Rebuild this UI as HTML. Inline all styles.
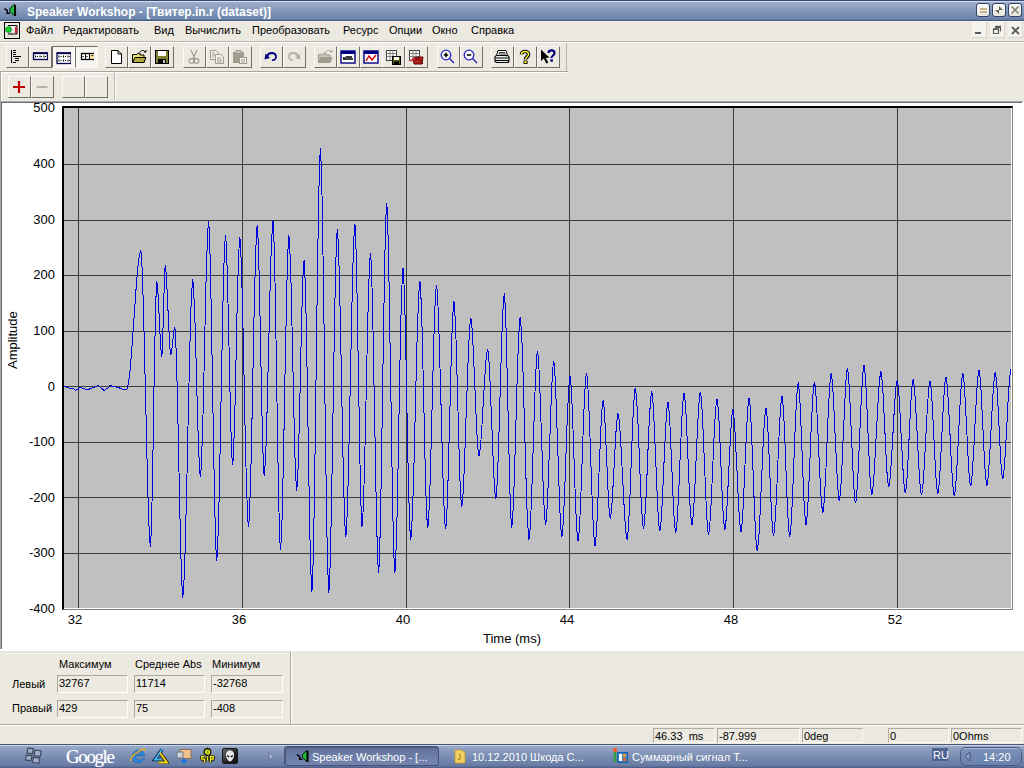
<!DOCTYPE html>
<html><head><meta charset="utf-8">
<style>
*{margin:0;padding:0;box-sizing:border-box}
html,body{width:1024px;height:768px;overflow:hidden;background:#ece9e1;font-family:"Liberation Sans",sans-serif;font-size:11px;color:#000;position:relative}
.a{position:absolute}
.tx{position:absolute;white-space:nowrap;line-height:1}
#title{left:0;top:0;width:1024px;height:21px;background:linear-gradient(#3a4a6a 0,#3a4a6a 1px,#d0dcf8 1px,#d0dcf8 2px,#9dadca 2px,#6a84ac 19px,#5f7496 20px,#4a5a78 20px,#4a5a78 21px)}
.L{position:absolute;height:1px}
.V{position:absolute;width:1px}
.btn{position:absolute;width:23px;height:22px;background:#ece9e1;border-top:1px solid #fbfaf8;border-left:1px solid #fbfaf8;border-right:1px solid #716f66;border-bottom:1px solid #716f66}
.btn.p{border-top:1px solid #716f66;border-left:1px solid #716f66;border-right:1px solid #fbfaf8;border-bottom:1px solid #fbfaf8;background:#f7f6f2}
.btn svg{position:absolute;left:2px;top:2px}
.yl{position:absolute;left:0;width:55px;font-size:13px;text-align:right;line-height:1;white-space:nowrap}
.xl{position:absolute;top:613px;width:40px;font-size:13px;text-align:center;line-height:1}
.fld{position:absolute;height:18px;border:1px solid #fff;border-top-color:#a9a79e;border-left-color:#a9a79e}
.fld span{position:absolute;left:1px;top:2px;font-size:11px;line-height:1;white-space:nowrap}
.sf{position:absolute;top:728px;height:15px;border:1px solid #fbfaf6;border-top-color:#aeaca3;border-left-color:#aeaca3}
.sf span{position:absolute;left:1px;top:2px;font-size:11px;line-height:1;white-space:nowrap}
.tb{position:absolute;color:#fff;font-size:12px;line-height:1;white-space:nowrap}
</style></head><body>
<!-- TITLE BAR -->
<div id="title" class="a"></div>
<svg class="a" style="left:2px;top:3px" width="15" height="14" viewBox="0 0 15 15">
<path d="M2 6 L5 8 L5 11 L8 11" fill="none" stroke="#000" stroke-width="1.6"/>
<path d="M8 6 L12 2 L13 2 L13 13 L12 13 L8 9 Z" fill="#1bbf3a" stroke="#000" stroke-width="1"/>
<rect x="12.5" y="2" width="2" height="12" fill="#000"/>
</svg>
<div class="tx" style="left:27px;top:6px;color:#fff;font-weight:bold;font-size:12px">Speaker Workshop - [Твитер.in.r (dataset)]</div>
<!-- title buttons -->
<div class="a" style="left:976px;top:3px;width:14px;height:14px;border:1px solid #34466a;border-radius:3px;background:linear-gradient(#fbfbfb,#e8e6e0)"></div>
<div class="a" style="left:980px;top:8px;width:7px;height:2px;background:#c4b68e"></div>
<div class="a" style="left:980px;top:11px;width:7px;height:2px;background:#c4b68e"></div>
<div class="a" style="left:992px;top:3px;width:14px;height:14px;border:1px solid #34466a;border-radius:3px;background:linear-gradient(#fbfbfb,#e8e6e0)"></div>
<svg class="a" style="left:994px;top:5px" width="10" height="10" viewBox="0 0 10 10"><path d="M5 1 L9 5 L5 5 Z M1 5 L5 5 L5 9 Z" fill="#6b6654"/></svg>
<div class="a" style="left:1008px;top:3px;width:14px;height:14px;border:1px solid #34466a;border-radius:3px;background:linear-gradient(#fbfbfb,#e8e6e0)"></div>
<svg class="a" style="left:1010px;top:5px" width="10" height="10" viewBox="0 0 10 10"><path d="M1.5 1.5 L8.5 8.5 M8.5 1.5 L1.5 8.5" stroke="#8a8470" stroke-width="1.6"/></svg>

<!-- MENU BAR -->
<div class="L" style="left:0;top:21px;width:1024px;background:#f4f4f6"></div>
<svg class="a" style="left:4px;top:22px" width="16" height="17" viewBox="0 0 16 17">
<rect x="0.5" y="0.5" width="15" height="16" fill="#e8e4de" stroke="#000"/>
<rect x="1.5" y="1.5" width="13" height="5" fill="#f5f0ee"/>
<path d="M4 3.5 H13 V12 H4" fill="none" stroke="#000" stroke-width="1"/>
<circle cx="4.5" cy="7.5" r="3" fill="#10d030" stroke="#0a6a10" stroke-width="0.6"/>
<path d="M12 5 V11" stroke="#d02030" stroke-width="2"/>
</svg>
<div class="tx" style="left:26px;top:25px">Файл</div>
<div class="tx" style="left:63px;top:25px">Редактировать</div>
<div class="tx" style="left:154px;top:25px">Вид</div>
<div class="tx" style="left:185px;top:25px">Вычислить</div>
<div class="tx" style="left:252px;top:25px">Преобразовать</div>
<div class="tx" style="left:343px;top:25px">Ресурс</div>
<div class="tx" style="left:389px;top:25px">Опции</div>
<div class="tx" style="left:432px;top:25px">Окно</div>
<div class="tx" style="left:471px;top:25px">Справка</div>
<!-- mdi buttons -->
<div class="a" style="left:972px;top:22px;width:15px;height:16px;border-right:1px solid #d8d6cc;border-bottom:1px solid #d8d6cc;background:#f4f3ee"></div>
<div class="a" style="left:975px;top:32px;width:6px;height:2px;background:#5a5a5a"></div>
<div class="a" style="left:990px;top:22px;width:15px;height:16px;border-right:1px solid #d8d6cc;border-bottom:1px solid #d8d6cc;background:#f4f3ee"></div>
<svg class="a" style="left:992px;top:25px" width="10" height="10" viewBox="0 0 10 10"><path d="M3 2.5 H8.5 V6.5 M1.5 4.5 H6.5 V8.5 H1.5 Z" fill="none" stroke="#5a5a5a" stroke-width="1.2"/><path d="M3 1.5 H9" stroke="#5a5a5a" stroke-width="1.4"/><path d="M1 4 H7" stroke="#5a5a5a" stroke-width="1.6"/></svg>
<div class="a" style="left:1008px;top:22px;width:15px;height:16px;border-right:1px solid #d8d6cc;border-bottom:1px solid #d8d6cc;background:#f4f3ee"></div>
<svg class="a" style="left:1011px;top:26px" width="9" height="9" viewBox="0 0 9 9"><path d="M1 1 L8 8 M8 1 L1 8" stroke="#5a5a5a" stroke-width="1.8"/></svg>

<div class="L" style="left:0;top:41px;width:1024px;background:#b9b6ad"></div>
<div class="L" style="left:0;top:42px;width:1024px;background:#fff"></div>

<!-- TOOLBAR 1 -->
<div class="btn" style="left:6px;top:46px;width:23px;height:22px"></div><svg class="a" style="left:9px;top:49px" width="16" height="16" viewBox="0 0 16 16"><path d="M2.5 1V14" stroke="#000" stroke-width="1"/><path d="M4 1.5H7M4 3.5H7M4 5.5H7M4 7.5H12M6 9.5H10M6 11.5H10M4 13.5H7" stroke="#000" stroke-width="1"/></svg>
<div class="btn" style="left:29px;top:46px;width:23px;height:22px"></div><svg class="a" style="left:32px;top:49px" width="16" height="16" viewBox="0 0 16 16"><rect x="1.5" y="4.5" width="14" height="6" fill="#fff" stroke="#000050" stroke-width="1.3"/><path d="M1 4H16" stroke="#000050" stroke-width="1.6"/><path d="M2 3.2V4M5 3.2V4M8 3.2V4M11 3.2V4M14 3.2V4" stroke="#000050"/><path d="M3.5 6.5V8.5M5 7.5H6M8 6.5V8.5M9 7.5H10M12 6.5V8.5M13 7.5H14" stroke="#000" stroke-width="1"/></svg>
<div class="btn p" style="left:52px;top:46px;width:23px;height:22px"></div><svg class="a" style="left:55px;top:49px" width="16" height="16" viewBox="0 0 16 16"><rect x="2" y="4.5" width="14" height="10" fill="#fff" stroke="#000050" stroke-width="1.3"/><path d="M1.5 4H16.5" stroke="#000050" stroke-width="1.6"/><path d="M3 3.2V4M6 3.2V4M9 3.2V4M12 3.2V4M15 3.2V4" stroke="#000050"/><path d="M4 6.5V8.5M5.5 7.5H6.5M8.5 6.5V8.5M10 7.5H11M13 6.5V8.5M14 7.5H14.7M4 10.5V12.5M5.5 11.5H6.5M8.5 10.5V12.5M10 11.5H11M13 10.5V12.5M14 11.5H14.7" stroke="#000" stroke-width="1"/></svg>
<div class="btn p" style="left:75px;top:46px;width:23px;height:22px"></div><svg class="a" style="left:78px;top:49px" width="16" height="16" viewBox="0 0 16 16"><rect x="3.5" y="4.5" width="13" height="6" fill="#fff" stroke="#000" stroke-width="1.3"/><rect x="12.5" y="5" width="3.5" height="5" fill="#f0d890"/><path d="M7.5 4.5V10.5M11.5 4.5V10.5" stroke="#000" stroke-width="1"/><path d="M5 7V8M9 7V8M13.5 6.5H15" stroke="#000" stroke-width="1.2"/></svg>
<div class="btn" style="left:105px;top:46px;width:23px;height:22px"></div><svg class="a" style="left:108px;top:49px" width="16" height="16" viewBox="0 0 16 16"><path d="M3.5 1.5H10L13.5 5V14.5H3.5Z" fill="#fff" stroke="#000"/><path d="M10 1.5V5H13.5" fill="none" stroke="#000"/></svg>
<div class="btn" style="left:128px;top:46px;width:23px;height:22px"></div><svg class="a" style="left:131px;top:49px" width="16" height="16" viewBox="0 0 16 16"><path d="M1.5 5.5H6L7 4H9V6H13V13.5H1.5Z" fill="#e8e070" stroke="#000"/><path d="M1.5 13.5L4 8.5H15L13 13.5Z" fill="#b0a840" stroke="#000"/><path d="M9 3C10 1 13 1 14 3" fill="none" stroke="#000"/><path d="M13 3H15V1" fill="none" stroke="#000"/></svg>
<div class="btn" style="left:151px;top:46px;width:23px;height:22px"></div><svg class="a" style="left:154px;top:49px" width="16" height="16" viewBox="0 0 16 16"><rect x="1.5" y="1.5" width="13" height="13" fill="#808030" stroke="#000"/><rect x="4" y="2" width="8" height="5" fill="#fff"/><rect x="4" y="10" width="8" height="4.5" fill="#000"/><rect x="9" y="11" width="2" height="3" fill="#c0c0c0"/></svg>
<div class="btn" style="left:183px;top:46px;width:23px;height:22px"></div><svg class="a" style="left:186px;top:49px" width="16" height="16" viewBox="0 0 16 16"><path d="M5 1L9 10M11 1L7 10" stroke="#a09c90" stroke-width="1.2"/><circle cx="5.5" cy="12" r="2.3" fill="none" stroke="#a09c90" stroke-width="1.2"/><circle cx="10.5" cy="12" r="2.3" fill="none" stroke="#a09c90" stroke-width="1.2"/></svg>
<div class="btn" style="left:206px;top:46px;width:23px;height:22px"></div><svg class="a" style="left:209px;top:49px" width="16" height="16" viewBox="0 0 16 16"><path d="M1.5 1.5H7L9 3.5V10.5H1.5Z" fill="#f4f2ec" stroke="#a09c90"/><path d="M6.5 5.5H12L14.5 8V14.5H6.5Z" fill="#f4f2ec" stroke="#a09c90"/><path d="M8 9H12M8 11H13M8 13H13M3 4H6M3 6H7M3 8H5" stroke="#a09c90"/></svg>
<div class="btn" style="left:229px;top:46px;width:23px;height:22px"></div><svg class="a" style="left:232px;top:49px" width="16" height="16" viewBox="0 0 16 16"><rect x="1" y="3" width="11" height="11" fill="#a09c90"/><rect x="4" y="1.5" width="5" height="3" fill="#c8c4b8" stroke="#a09c90"/><rect x="7.5" y="8.5" width="7" height="6" fill="#f4f2ec" stroke="#a09c90"/><path d="M9 11H13M9 13H13" stroke="#a09c90"/></svg>
<div class="btn" style="left:260px;top:46px;width:23px;height:22px"></div><svg class="a" style="left:263px;top:49px" width="16" height="16" viewBox="0 0 16 16"><path d="M4 7C6 3 12 3 13 7C13.5 10 11 11.5 9 11" fill="none" stroke="#000080" stroke-width="1.8"/><path d="M1.5 10.5L2.5 4.5L7 9Z" fill="#000080"/></svg>
<div class="btn" style="left:283px;top:46px;width:23px;height:22px"></div><svg class="a" style="left:286px;top:49px" width="16" height="16" viewBox="0 0 16 16"><path d="M12 7C10 3 4 3 3 7C2.5 10 5 11.5 7 11" fill="none" stroke="#b4b0a4" stroke-width="1.8"/><path d="M14.5 10.5L13.5 4.5L9 9Z" fill="#b4b0a4"/></svg>
<div class="btn" style="left:314px;top:46px;width:23px;height:22px"></div><svg class="a" style="left:317px;top:49px" width="16" height="16" viewBox="0 0 16 16"><path d="M1.5 5.5H6L7 4H9V6H13V13.5H1.5Z" fill="#c8c4b8" stroke="#a09c90"/><path d="M1.5 13.5L4 8.5H15L13 13.5Z" fill="#a09c90" stroke="#a09c90"/><path d="M9 3C10 1 13 1 14 3M13 3H15V1" fill="none" stroke="#a09c90"/></svg>
<div class="btn" style="left:337px;top:46px;width:23px;height:22px"></div><svg class="a" style="left:340px;top:49px" width="16" height="16" viewBox="0 0 16 16"><rect x="1" y="2" width="14" height="12" fill="#fff" stroke="#000080" stroke-width="1.4"/><rect x="1" y="2" width="14" height="3" fill="#000080"/><path d="M3 9H5M3 10H13" stroke="#000" stroke-width="1.3"/><path d="M5.5 8H12" stroke="#000" stroke-width="1.5"/></svg>
<div class="btn" style="left:360px;top:46px;width:23px;height:22px"></div><svg class="a" style="left:363px;top:49px" width="16" height="16" viewBox="0 0 16 16"><rect x="1" y="2" width="14" height="12" fill="#fff" stroke="#000080" stroke-width="1.4"/><rect x="1" y="2" width="14" height="3" fill="#000080"/><path d="M3 12L6 7L9 11L13 6" fill="none" stroke="#d00000" stroke-width="1.4"/></svg>
<div class="btn" style="left:382px;top:46px;width:23px;height:22px"></div><svg class="a" style="left:385px;top:49px" width="16" height="16" viewBox="0 0 16 16"><rect x="1.5" y="1.5" width="10" height="10" fill="#fff" stroke="#404040"/><path d="M1.5 4.5H11.5M1.5 7.5H11.5M5 1.5V11.5M8 1.5V11.5" stroke="#808080"/><rect x="7.5" y="7.5" width="8" height="8" fill="#506010" stroke="#000"/><rect x="9" y="8" width="5" height="3" fill="#fff"/><rect x="9" y="12.5" width="5" height="3" fill="#000"/></svg>
<div class="btn" style="left:405px;top:46px;width:23px;height:22px"></div><svg class="a" style="left:408px;top:49px" width="16" height="16" viewBox="0 0 16 16"><rect x="1.5" y="1.5" width="10" height="10" fill="#fff" stroke="#404040"/><path d="M1.5 4.5H11.5M1.5 7.5H11.5M5 1.5V11.5M8 1.5V11.5" stroke="#808080"/><path d="M5 9L10 8H15L14 15H6Z" fill="#b02020" stroke="#600000"/><path d="M5 10L11 10L15 15" fill="none" stroke="#600000"/><path d="M2 12L7 9" stroke="#e04040" stroke-width="2"/></svg>
<div class="btn" style="left:437px;top:46px;width:23px;height:22px"></div><svg class="a" style="left:440px;top:49px" width="16" height="16" viewBox="0 0 16 16"><circle cx="6" cy="6" r="4.8" fill="#fcfcff" stroke="#2828c8" stroke-width="1.3"/><path d="M3.8 6H8.2M6 3.8V8.2" stroke="#000" stroke-width="1.5"/><path d="M9.3 9.3L14 14" stroke="#2828b0" stroke-width="1.5"/></svg>
<div class="btn" style="left:460px;top:46px;width:23px;height:22px"></div><svg class="a" style="left:463px;top:49px" width="16" height="16" viewBox="0 0 16 16"><circle cx="6" cy="6" r="4.8" fill="#fcfcff" stroke="#2828c8" stroke-width="1.3"/><path d="M3.8 6H8.2" stroke="#000" stroke-width="1.5"/><path d="M9.3 9.3L14 14" stroke="#2828b0" stroke-width="1.5"/></svg>
<div class="btn" style="left:491px;top:46px;width:23px;height:22px"></div><svg class="a" style="left:494px;top:49px" width="16" height="16" viewBox="0 0 16 16"><path d="M4 1.5H12L13.5 6.5H2.5Z" fill="#fff" stroke="#000"/><path d="M5 3.5H11M4.5 5H12" stroke="#000" stroke-width="0.8"/><rect x="1" y="6.5" width="14" height="7" rx="2" fill="#f0f0f0" stroke="#000" stroke-width="1.2"/><path d="M1.5 9H14.5M1.5 11.5H14.5" stroke="#000" stroke-width="1.2"/><rect x="11.5" y="7.5" width="2" height="1.2" fill="#50a050"/></svg>
<div class="btn" style="left:514px;top:46px;width:23px;height:22px"></div><svg class="a" style="left:517px;top:49px" width="16" height="16" viewBox="0 0 16 16"><path d="M4.5 5.5C4.5 1.5 11.5 1.5 11.5 5.5C11.5 8 8.5 8 8.5 10.5" fill="none" stroke="#000" stroke-width="3.6"/><path d="M4.5 5.5C4.5 1.5 11.5 1.5 11.5 5.5C11.5 8 8.5 8 8.5 10.5" fill="none" stroke="#ffff20" stroke-width="1.5"/><rect x="6.5" y="11.5" width="4" height="3.5" fill="#000"/><rect x="7.3" y="12.2" width="2.2" height="2" fill="#ff0"/></svg>
<div class="btn" style="left:537px;top:46px;width:23px;height:22px"></div><svg class="a" style="left:540px;top:49px" width="16" height="16" viewBox="0 0 16 16"><path d="M1 0.5L1 12L3.8 9.5L6.3 14.5L8.3 13.5L5.8 8.8H9.5Z" fill="#000"/><path d="M8.5 4C8.5 0.5 14.5 0.5 14.5 4C14.5 6.5 11.5 6.5 11.5 9" fill="none" stroke="#000080" stroke-width="2.2"/><rect x="10.3" y="10.3" width="2.6" height="2.4" fill="#000080"/></svg>
<div class="V" style="left:566px;top:43px;height:28px;background:#b9b6ad"></div>
<div class="L" style="left:0;top:71px;width:568px;background:#a9a69d"></div>
<div class="L" style="left:0;top:72px;width:567px;background:#fff"></div>
<div class="V" style="left:0;top:72px;height:29px;background:#a9a69d"></div><div class="V" style="left:1px;top:72px;height:29px;background:#fff"></div>
<!-- TOOLBAR 2 -->
<div class="btn" style="left:8px;top:76px;width:23px;height:22px"></div><svg class="a" style="left:11px;top:79px" width="16" height="16" viewBox="0 0 16 16"><path d="M8 2V14M2 8H14" stroke="#c00000" stroke-width="2.2"/></svg>
<div class="btn" style="left:31px;top:76px;width:23px;height:22px"></div><svg class="a" style="left:34px;top:79px" width="16" height="16" viewBox="0 0 16 16"><path d="M2.5 8H13.5" stroke="#a8a59c" stroke-width="1.6"/></svg>
<div class="btn" style="left:62px;top:76px;width:23px;height:22px"></div>
<div class="btn" style="left:85px;top:76px;width:23px;height:22px"></div>
<div class="V" style="left:114px;top:72px;height:28px;background:#b9b6ad"></div><div class="V" style="left:115px;top:72px;height:28px;background:#fff"></div>

<!-- CHART PANEL -->
<div class="a" style="left:0;top:101px;width:1024px;height:550px;background:#fff"></div>
<div class="L" style="left:0;top:101px;width:1023px;background:#a8a8a8"></div>
<div class="L" style="left:1px;top:102px;width:1021px;background:#6e6e6e"></div>
<div class="V" style="left:0;top:101px;height:548px;background:#a8a8a8"></div>
<div class="V" style="left:1px;top:102px;height:547px;background:#6e6e6e"></div>

<!-- plot -->
<div class="a" style="left:62px;top:106px;width:951px;height:504px;background:#c0c0c0;border-top:2px solid #000;border-left:2px solid #000;border-right:1px solid #808080;border-bottom:1px solid #808080;box-shadow:inset -1px -1px 0 #fff"></div>
<svg class="a" style="left:0;top:0" width="1024" height="768" viewBox="0 0 1024 768">
<defs><clipPath id="cp"><rect x="64" y="108" width="947" height="500"/></clipPath></defs>
<g stroke="#3c3c3c" stroke-width="1" shape-rendering="crispEdges">
<path d="M64 164.5H1011M64 220.5H1011M64 275.5H1011M64 331.5H1011M64 386.5H1011M64 442.5H1011M64 497.5H1011M64 553.5H1011"/>
<path d="M78.5 108V608M242.5 108V608M406.5 108V608M569.5 108V608M733.5 108V608M897.5 108V608"/>
</g>
<path clip-path="url(#cp)" d="M64.0,386.3 64.6,386.4 65.1,386.6 65.7,387.0 66.2,387.2 66.8,387.3 67.4,387.4 67.9,387.6 68.5,387.9 69.1,388.3 69.6,388.5 70.2,388.6 70.7,388.6 71.3,388.5 71.8,388.4 72.4,388.3 72.9,388.3 73.5,388.5 74.1,389.1 74.7,389.8 75.3,390.0 75.9,390.0 76.5,389.9 77.1,389.7 77.7,389.7 78.2,389.3 78.8,388.5 79.3,387.7 79.8,387.3 80.3,387.3 80.8,387.5 81.3,387.7 81.8,387.9 82.4,388.2 82.9,388.4 83.4,388.6 83.9,388.6 84.5,388.7 85.0,388.9 85.6,389.3 86.2,389.6 86.7,389.9 87.3,390.0 87.9,389.9 88.4,389.7 89.0,389.3 89.6,389.0 90.1,388.7 90.7,388.6 91.3,388.5 91.8,388.3 92.4,388.0 93.0,387.6 93.5,387.4 94.1,387.3 94.6,387.2 95.1,387.1 95.6,386.8 96.2,386.5 96.7,386.1 97.2,385.8 97.7,385.7 98.2,385.6 98.8,385.8 99.3,386.4 99.9,387.2 100.4,387.8 101.0,388.0 101.6,388.2 102.1,388.6 102.7,389.2 103.3,389.8 103.8,390.2 104.4,390.4 104.9,390.2 105.5,389.8 106.0,389.2 106.6,388.8 107.1,388.6 107.7,388.4 108.2,387.9 108.8,387.1 109.4,386.4 109.9,385.8 110.5,385.6 111.1,385.7 111.6,385.9 112.2,386.1 112.8,386.4 113.3,386.5 113.9,386.6 114.4,386.6 114.9,386.7 115.4,386.8 116.0,386.9 116.5,387.1 117.0,387.2 117.5,387.3 118.0,387.3 118.6,387.4 119.1,387.7 119.7,388.2 120.2,388.5 120.8,388.6 121.4,388.7 121.9,388.9 122.5,389.3 123.1,389.6 123.6,389.9 124.2,390.0 124.8,389.9 125.3,389.6 125.9,389.4 126.4,389.1 127.0,389.0 127.5,387.6 128.0,385.4 128.5,382.6 129.0,379.0 129.6,374.7 130.1,369.8 130.6,364.3 131.1,358.4 131.6,351.9 132.1,345.1 132.6,338.0 133.1,330.7 133.6,323.2 134.2,315.8 134.7,308.3 135.2,301.0 135.7,293.9 136.2,287.1 136.7,280.6 137.2,274.7 137.7,269.2 138.2,264.3 138.8,260.0 139.3,256.4 139.8,253.6 140.3,251.4 140.8,250.0 141.3,254.7 141.8,262.7 142.3,273.7 142.8,287.6 143.3,304.0 143.8,322.6 144.3,343.0 144.8,364.6 145.3,387.1 145.9,409.9 146.4,432.4 146.9,454.0 147.4,474.4 147.9,493.0 148.4,509.4 148.9,523.3 149.4,534.3 149.9,542.3 150.4,547.0 150.9,539.0 151.5,523.9 152.0,502.6 152.5,476.2 153.1,446.2 153.6,414.2 154.1,382.3 154.7,352.3 155.2,325.9 155.7,304.6 156.3,289.5 156.8,281.5 157.3,284.5 157.8,290.3 158.3,298.4 158.8,308.3 159.3,319.1 159.8,329.9 160.3,339.8 160.8,347.9 161.3,353.7 161.8,356.7 162.4,348.7 162.9,332.3 163.5,310.9 164.1,289.6 164.6,273.2 165.2,265.2 165.7,268.3 166.2,274.2 166.7,282.5 167.2,292.7 167.7,304.2 168.3,316.0 168.8,327.5 169.3,337.7 169.8,346.0 170.3,351.9 170.8,355.0 171.3,353.4 171.8,350.3 172.3,345.9 172.8,340.9 173.3,335.9 173.8,331.5 174.3,328.4 174.8,326.8 175.3,332.3 175.8,341.8 176.3,355.2 176.8,372.0 177.3,391.8 177.8,413.9 178.3,437.6 178.8,462.1 179.3,486.7 179.8,510.4 180.3,532.5 180.8,552.3 181.3,569.1 181.8,582.5 182.3,592.0 182.8,597.5 183.3,592.4 183.8,583.9 184.4,572.1 184.9,557.3 185.4,539.7 185.9,519.8 186.4,498.0 187.0,474.7 187.5,450.7 188.0,426.3 188.5,402.3 189.1,379.0 189.6,357.2 190.1,337.3 190.6,319.7 191.1,304.9 191.7,293.1 192.2,284.6 192.7,279.5 193.2,283.9 193.7,291.6 194.2,302.5 194.8,316.2 195.3,332.2 195.8,349.9 196.3,368.7 196.8,387.8 197.3,406.6 197.8,424.3 198.3,440.3 198.9,454.0 199.4,464.9 199.9,472.6 200.4,477.0 200.9,471.8 201.4,462.8 201.9,450.2 202.4,434.3 203.0,415.6 203.5,394.7 204.0,372.3 204.5,349.1 205.0,326.0 205.5,303.6 206.0,282.7 206.6,264.0 207.1,248.1 207.6,235.5 208.1,226.5 208.6,221.3 209.1,228.1 209.6,240.1 210.1,256.9 210.6,278.0 211.1,302.8 211.6,330.5 212.1,360.2 212.6,391.0 213.2,421.7 213.7,451.4 214.2,479.1 214.7,503.9 215.2,525.0 215.7,541.8 216.2,553.8 216.7,560.6 217.2,554.5 217.7,544.1 218.3,529.6 218.8,511.3 219.3,489.7 219.8,465.4 220.3,439.2 220.8,411.7 221.4,383.8 221.9,356.3 222.4,330.1 222.9,305.8 223.4,284.2 223.9,265.9 224.5,251.4 225.0,241.0 225.5,234.9 226.0,240.5 226.5,250.6 227.0,264.8 227.5,282.7 228.0,303.4 228.5,326.2 229.1,349.9 229.6,373.7 230.1,396.5 230.6,417.2 231.1,435.1 231.6,449.3 232.1,459.4 232.6,465.0 233.1,459.5 233.6,449.5 234.1,435.4 234.7,417.7 235.2,397.1 235.7,374.6 236.2,351.1 236.7,327.6 237.2,305.1 237.7,284.5 238.3,266.8 238.8,252.7 239.3,242.7 239.8,237.2 240.3,242.6 240.8,251.8 241.3,264.8 241.8,281.1 242.4,300.3 242.9,321.9 243.4,345.3 243.9,369.7 244.4,394.5 244.9,418.9 245.4,442.3 245.9,463.9 246.5,483.1 247.0,499.4 247.5,512.4 248.0,521.6 248.5,527.0 249.0,521.4 249.5,511.7 250.0,498.3 250.5,481.3 251.1,461.3 251.6,438.8 252.1,414.5 252.6,389.0 253.1,363.2 253.6,337.7 254.1,313.4 254.6,290.9 255.2,270.9 255.7,253.9 256.2,240.5 256.7,230.8 257.2,225.2 257.7,231.3 258.2,242.3 258.7,257.8 259.2,277.3 259.7,299.9 260.2,324.7 260.7,350.5 261.2,376.4 261.7,401.2 262.2,423.8 262.7,443.3 263.2,458.8 263.7,469.8 264.2,475.9 264.7,471.2 265.2,463.0 265.8,451.7 266.3,437.3 266.8,420.5 267.3,401.5 267.8,381.0 268.3,359.5 268.9,337.7 269.4,316.2 269.9,295.7 270.4,276.7 270.9,259.9 271.4,245.5 272.0,234.2 272.5,226.0 273.0,221.3 273.5,228.6 274.0,241.5 274.5,259.6 275.0,282.4 275.5,309.1 276.0,338.6 276.5,369.9 277.0,401.8 277.5,433.1 278.0,462.6 278.5,489.3 279.0,512.1 279.5,530.2 280.0,543.1 280.5,550.4 281.0,544.0 281.6,532.9 282.1,517.4 282.6,497.8 283.1,474.7 283.6,449.0 284.2,421.5 284.7,392.9 285.2,364.4 285.8,336.9 286.3,311.2 286.8,288.1 287.3,268.5 287.8,253.0 288.4,241.9 288.9,235.5 289.4,241.1 289.9,251.1 290.5,265.2 291.0,282.8 291.5,303.5 292.0,326.4 292.5,350.6 293.1,375.4 293.6,399.6 294.1,422.5 294.6,443.2 295.1,460.8 295.7,474.9 296.2,484.9 296.7,490.5 297.2,484.9 297.8,474.8 298.3,460.5 298.8,442.5 299.3,421.7 299.9,398.9 300.4,375.1 300.9,351.2 301.5,328.4 302.0,307.6 302.5,289.6 303.0,275.3 303.6,265.2 304.1,259.6 304.6,266.9 305.1,280.0 305.7,298.3 306.2,321.3 306.7,348.2 307.2,378.1 307.7,409.7 308.3,441.9 308.8,473.5 309.3,503.4 309.8,530.3 310.3,553.3 310.9,571.6 311.4,584.7 311.9,592.0 312.4,583.8 312.9,569.6 313.4,549.8 313.9,524.8 314.4,495.4 314.9,462.4 315.4,426.6 315.9,389.2 316.4,351.3 316.9,313.9 317.4,278.1 317.9,245.1 318.4,215.7 318.9,190.7 319.4,170.9 319.9,156.7 320.4,148.5 320.9,157.5 321.4,173.1 322.0,195.1 322.5,222.8 323.0,255.3 323.6,291.6 324.1,330.5 324.6,370.8 325.1,411.0 325.6,449.9 326.2,486.2 326.7,518.7 327.2,546.4 327.8,568.4 328.3,584.0 328.8,593.0 329.3,586.2 329.8,574.6 330.3,558.3 330.8,537.8 331.3,513.7 331.8,486.5 332.3,457.2 332.8,426.5 333.3,395.3 333.8,364.6 334.3,335.3 334.8,308.1 335.3,284.0 335.8,263.5 336.3,247.2 336.8,235.6 337.3,228.8 337.8,234.5 338.3,244.4 338.8,258.1 339.3,275.5 339.8,295.9 340.3,318.9 340.8,343.7 341.3,369.7 341.8,396.0 342.3,422.0 342.8,446.8 343.3,469.8 343.8,490.2 344.3,507.6 344.8,521.3 345.3,531.2 345.8,536.9 346.3,531.5 346.8,522.4 347.3,509.7 347.8,493.7 348.3,474.7 348.8,453.4 349.3,430.1 349.8,405.5 350.4,380.3 350.9,355.1 351.4,330.5 351.9,307.2 352.4,285.9 352.9,266.9 353.4,250.9 353.9,238.2 354.4,229.1 354.9,223.7 355.4,231.1 355.9,244.4 356.4,263.1 356.9,286.6 357.4,314.0 357.9,343.9 358.4,375.2 359.0,406.5 359.5,436.4 360.0,463.8 360.5,487.3 361.0,506.0 361.5,519.3 362.0,526.7 362.5,521.6 363.0,512.9 363.5,500.7 364.0,485.3 364.5,467.2 365.0,446.8 365.5,424.8 366.0,401.8 366.5,378.4 367.0,355.4 367.5,333.4 368.0,313.0 368.5,294.9 369.0,279.5 369.5,267.3 370.0,258.6 370.5,253.5 371.0,260.0 371.5,271.2 372.0,287.1 372.5,307.0 373.0,330.4 373.5,356.5 374.0,384.5 374.6,413.4 375.1,442.4 375.6,470.4 376.1,496.5 376.6,519.9 377.1,539.8 377.6,555.7 378.1,566.9 378.6,573.4 379.1,565.9 379.6,552.8 380.1,534.5 380.6,511.4 381.1,484.3 381.6,454.1 382.1,421.6 382.6,388.0 383.2,354.5 383.7,322.0 384.2,291.8 384.7,264.7 385.2,241.6 385.7,223.3 386.2,210.2 386.7,202.7 387.2,210.2 387.7,223.3 388.2,241.6 388.7,264.7 389.2,291.8 389.7,322.0 390.2,354.5 390.8,388.0 391.3,421.6 391.8,454.1 392.3,484.3 392.8,511.4 393.3,534.5 393.8,552.8 394.3,565.9 394.8,573.4 395.3,567.2 395.8,556.4 396.3,541.3 396.9,522.3 397.4,499.9 397.9,475.0 398.4,448.2 398.9,420.5 399.4,392.9 399.9,366.1 400.4,341.2 400.9,318.8 401.5,299.8 402.0,284.7 402.5,273.9 403.0,267.7 403.5,273.7 404.0,284.4 404.5,299.4 405.1,318.3 405.6,340.4 406.1,364.8 406.6,390.7 407.1,417.2 407.6,443.1 408.1,467.5 408.6,489.6 409.2,508.5 409.7,523.5 410.2,534.2 410.7,540.2 411.2,535.7 411.7,528.2 412.2,517.6 412.7,504.4 413.3,488.7 413.8,471.0 414.3,451.7 414.8,431.3 415.3,410.4 415.8,389.5 416.3,369.1 416.8,349.8 417.3,332.1 417.9,316.4 418.4,303.2 418.9,292.6 419.4,285.1 419.9,280.6 420.4,286.1 420.9,295.8 421.5,309.4 422.0,326.6 422.5,346.7 423.0,368.9 423.5,392.5 424.1,416.5 424.6,440.1 425.1,462.3 425.6,482.4 426.1,499.6 426.7,513.2 427.2,522.9 427.7,528.4 428.2,523.9 428.7,516.1 429.3,505.2 429.8,491.5 430.3,475.4 430.8,457.3 431.3,437.6 431.8,417.1 432.4,396.3 432.9,375.8 433.4,356.1 433.9,338.0 434.4,321.9 434.9,308.2 435.5,297.3 436.0,289.5 436.5,285.0 437.0,289.2 437.5,296.3 438.0,306.2 438.5,318.7 439.0,333.5 439.5,350.2 440.0,368.3 440.5,387.5 441.1,407.2 441.6,426.9 442.1,446.1 442.6,464.2 443.1,480.9 443.6,495.7 444.1,508.2 444.6,518.1 445.1,525.2 445.6,529.4 446.1,524.8 446.6,516.7 447.2,505.4 447.7,491.2 448.2,474.5 448.7,455.8 449.2,435.8 449.8,415.1 450.3,394.5 450.8,374.5 451.3,355.8 451.8,339.1 452.3,324.9 452.9,313.6 453.4,305.5 453.9,300.9 454.4,305.5 454.9,313.5 455.5,324.9 456.0,339.2 456.5,356.0 457.0,374.5 457.5,394.1 458.1,414.2 458.6,433.8 459.1,452.3 459.6,469.1 460.1,483.4 460.7,494.8 461.2,502.8 461.7,507.4 462.2,504.1 462.7,498.6 463.2,490.9 463.7,481.2 464.2,469.8 464.7,456.8 465.2,442.8 465.7,427.9 466.2,412.6 466.8,397.3 467.3,382.4 467.8,368.4 468.3,355.4 468.8,344.0 469.3,334.3 469.8,326.6 470.3,321.1 470.8,317.8 471.3,320.6 471.8,325.5 472.3,332.3 472.8,340.9 473.3,351.0 473.8,362.3 474.3,374.4 474.9,386.9 475.4,399.4 475.9,411.5 476.4,422.8 476.9,432.9 477.4,441.5 477.9,448.3 478.4,453.2 478.9,456.0 479.4,454.0 479.9,450.6 480.5,445.8 481.0,439.8 481.5,432.7 482.0,424.7 482.5,416.1 483.0,407.1 483.6,397.9 484.1,388.9 484.6,380.3 485.1,372.3 485.6,365.2 486.1,359.2 486.7,354.4 487.2,351.0 487.7,349.0 488.2,352.0 488.7,357.3 489.2,364.7 489.7,374.1 490.2,385.0 490.7,397.3 491.2,410.4 491.8,424.0 492.3,437.6 492.8,450.7 493.3,463.0 493.8,473.9 494.3,483.3 494.8,490.7 495.3,496.0 495.8,499.0 496.3,495.2 496.8,488.6 497.3,479.4 497.8,467.9 498.3,454.2 498.8,438.9 499.3,422.3 499.8,405.0 500.3,387.4 500.8,370.1 501.3,353.5 501.8,338.2 502.3,324.5 502.8,313.0 503.3,303.8 503.8,297.2 504.3,293.4 504.8,299.1 505.4,309.4 505.9,323.9 506.4,342.1 506.9,363.2 507.5,386.3 508.0,410.6 508.5,434.8 509.1,457.9 509.6,479.0 510.1,497.2 510.6,511.7 511.2,522.0 511.7,527.7 512.2,523.8 512.7,517.0 513.2,507.6 513.7,495.8 514.2,481.8 514.7,466.1 515.2,449.1 515.7,431.3 516.2,413.2 516.7,395.4 517.2,378.4 517.7,362.7 518.2,348.7 518.7,336.9 519.2,327.5 519.7,320.7 520.2,316.8 520.7,320.9 521.2,328.1 521.8,338.0 522.3,350.5 522.8,365.3 523.3,381.9 523.8,399.9 524.3,418.7 524.9,437.7 525.4,456.5 525.9,474.5 526.4,491.1 526.9,505.9 527.4,518.4 528.0,528.3 528.5,535.5 529.0,539.6 529.5,536.1 530.0,530.1 530.5,521.6 531.0,511.0 531.5,498.5 532.0,484.5 532.5,469.3 533.0,453.4 533.5,437.2 534.0,421.3 534.5,406.1 535.0,392.1 535.5,379.6 536.0,369.0 536.5,360.5 537.0,354.5 537.5,351.0 538.0,354.5 538.5,360.6 539.0,369.3 539.5,380.1 540.0,392.8 540.5,407.0 541.0,422.2 541.5,438.0 542.1,453.8 542.6,469.0 543.1,483.2 543.6,495.9 544.1,506.7 544.6,515.4 545.1,521.5 545.6,525.0 546.1,521.7 546.6,515.9 547.1,507.8 547.6,497.6 548.1,485.6 548.6,472.2 549.1,457.9 549.7,443.1 550.2,428.2 550.7,413.9 551.2,400.5 551.7,388.5 552.2,378.3 552.7,370.2 553.2,364.4 553.7,361.1 554.2,364.7 554.7,370.9 555.2,379.6 555.7,390.5 556.2,403.4 556.7,417.8 557.2,433.2 557.8,449.2 558.3,465.1 558.8,480.5 559.3,494.9 559.8,507.8 560.3,518.7 560.8,527.4 561.3,533.6 561.8,537.2 562.3,533.9 562.8,528.3 563.3,520.3 563.8,510.3 564.4,498.5 564.9,485.3 565.4,471.2 565.9,456.6 566.4,442.0 566.9,427.9 567.4,414.7 568.0,402.9 568.5,392.9 569.0,384.9 569.5,379.3 570.0,376.0 570.5,379.3 571.0,385.2 571.5,393.3 572.0,403.6 572.5,415.7 573.0,429.2 573.5,443.7 574.0,458.6 574.5,473.6 575.0,488.1 575.5,501.6 576.0,513.7 576.5,524.0 577.0,532.1 577.5,538.0 578.0,541.3 578.5,538.2 579.0,532.8 579.5,525.3 580.0,515.8 580.5,504.6 581.0,492.1 581.5,478.5 582.0,464.4 582.5,449.9 583.0,435.8 583.5,422.2 584.0,409.7 584.5,398.5 585.0,389.0 585.5,381.5 586.0,376.1 586.5,373.0 587.0,376.2 587.5,381.7 588.0,389.4 588.5,399.2 589.0,410.6 589.5,423.5 590.0,437.4 590.5,452.0 591.0,466.7 591.5,481.3 592.0,495.2 592.5,508.1 593.0,519.5 593.5,529.3 594.0,537.0 594.5,542.5 595.0,545.7 595.5,542.8 596.0,537.6 596.5,530.4 597.0,521.4 597.5,510.7 598.0,498.8 598.5,486.1 599.0,472.9 599.6,459.7 600.1,447.0 600.6,435.1 601.1,424.4 601.6,415.4 602.1,408.2 602.6,403.0 603.1,400.1 603.6,403.0 604.1,408.2 604.6,415.5 605.1,424.7 605.6,435.4 606.1,447.1 606.7,459.4 607.2,471.6 607.7,483.3 608.2,494.0 608.7,503.2 609.2,510.5 609.7,515.7 610.2,518.6 610.7,516.3 611.2,512.2 611.8,506.4 612.3,499.1 612.8,490.6 613.3,481.2 613.8,471.2 614.4,461.0 614.9,451.0 615.4,441.6 615.9,433.1 616.4,425.8 617.0,420.0 617.5,415.9 618.0,413.6 618.5,415.8 619.0,419.4 619.5,424.6 620.0,431.0 620.5,438.6 621.0,447.2 621.5,456.6 622.0,466.4 622.5,476.6 623.1,486.8 623.6,496.6 624.1,506.0 624.6,514.6 625.1,522.2 625.6,528.6 626.1,533.8 626.6,537.4 627.1,539.6 627.6,536.5 628.1,531.2 628.6,523.7 629.1,514.2 629.7,503.1 630.2,490.7 630.7,477.4 631.2,463.6 631.7,449.9 632.2,436.6 632.7,424.2 633.2,413.1 633.8,403.6 634.3,396.1 634.8,390.8 635.3,387.7 635.8,390.6 636.3,395.5 636.8,402.5 637.3,411.3 637.9,421.7 638.4,433.2 638.9,445.6 639.4,458.4 639.9,471.1 640.4,483.5 640.9,495.0 641.5,505.4 642.0,514.2 642.5,521.2 643.0,526.1 643.5,529.0 644.0,526.2 644.5,521.3 645.0,514.5 645.5,505.9 646.1,495.8 646.6,484.6 647.1,472.5 647.6,460.0 648.1,447.5 648.6,435.4 649.1,424.2 649.7,414.1 650.2,405.5 650.7,398.7 651.2,393.8 651.7,391.0 652.2,393.8 652.7,398.8 653.2,405.7 653.7,414.5 654.2,424.7 654.7,436.2 655.2,448.5 655.8,461.2 656.3,473.9 656.8,486.2 657.3,497.7 657.8,507.9 658.3,516.7 658.8,523.6 659.3,528.6 659.8,531.4 660.3,528.8 660.8,524.2 661.3,517.8 661.8,509.7 662.3,500.3 662.8,489.7 663.3,478.3 663.8,466.6 664.4,454.9 664.9,443.5 665.4,432.9 665.9,423.5 666.4,415.4 666.9,409.0 667.4,404.4 667.9,401.8 668.4,404.7 668.9,409.8 669.5,417.1 670.0,426.2 670.5,436.8 671.0,448.6 671.5,461.1 672.1,473.8 672.6,486.3 673.1,498.1 673.6,508.7 674.1,517.8 674.7,525.1 675.2,530.2 675.7,533.1 676.2,530.3 676.8,525.3 677.3,518.4 677.8,509.6 678.3,499.3 678.9,487.9 679.4,475.6 679.9,462.9 680.4,450.1 681.0,437.8 681.5,426.4 682.0,416.1 682.5,407.3 683.1,400.4 683.6,395.4 684.1,392.6 684.6,395.5 685.1,400.7 685.7,408.0 686.2,417.2 686.7,428.0 687.2,439.9 687.7,452.5 688.3,465.4 688.8,478.0 689.3,489.9 689.8,500.7 690.3,509.9 690.9,517.2 691.4,522.4 691.9,525.3 692.4,522.8 692.9,518.5 693.4,512.6 693.9,505.1 694.4,496.2 694.9,486.2 695.4,475.4 695.9,464.2 696.4,452.7 696.9,441.5 697.4,430.7 697.9,420.7 698.4,411.8 698.9,404.3 699.4,398.4 699.9,394.1 700.4,391.6 700.9,394.5 701.4,399.5 701.9,406.6 702.4,415.5 702.9,426.0 703.4,437.7 703.9,450.2 704.5,463.2 705.0,476.2 705.5,488.7 706.0,500.4 706.5,510.9 707.0,519.8 707.5,526.9 708.0,531.9 708.5,534.8 709.0,532.3 709.5,527.9 710.0,521.8 710.5,514.2 711.0,505.2 711.5,495.0 712.0,484.0 712.5,472.6 713.0,460.9 713.5,449.5 714.0,438.5 714.5,428.3 715.0,419.3 715.5,411.7 716.0,405.6 716.5,401.2 717.0,398.7 717.5,401.6 718.0,406.7 718.6,413.9 719.1,423.0 719.6,433.6 720.1,445.4 720.6,457.8 721.2,470.6 721.7,483.0 722.2,494.8 722.7,505.4 723.2,514.5 723.8,521.7 724.3,526.8 724.8,529.7 725.3,527.3 725.8,523.0 726.3,517.1 726.8,509.6 727.3,500.8 727.8,491.0 728.3,480.5 728.8,469.7 729.4,458.8 729.9,448.3 730.4,438.5 730.9,429.7 731.4,422.2 731.9,416.3 732.4,412.0 732.9,409.6 733.4,412.1 733.9,416.4 734.4,422.5 734.9,430.1 735.4,439.0 735.9,449.0 736.4,459.8 737.0,470.9 737.5,481.9 738.0,492.7 738.5,502.7 739.0,511.6 739.5,519.2 740.0,525.3 740.5,529.6 741.0,532.1 741.5,529.4 742.0,524.6 742.5,518.0 743.0,509.6 743.5,499.8 744.0,488.8 744.5,477.1 745.0,464.9 745.6,452.7 746.1,441.0 746.6,430.0 747.1,420.2 747.6,411.8 748.1,405.2 748.6,400.4 749.1,397.7 749.6,400.8 750.1,406.2 750.6,413.8 751.1,423.3 751.6,434.5 752.1,447.0 752.6,460.3 753.2,474.2 753.7,488.1 754.2,501.4 754.7,513.9 755.2,525.1 755.7,534.6 756.2,542.2 756.7,547.6 757.2,550.7 757.7,548.0 758.2,543.5 758.8,537.1 759.3,529.1 759.8,519.6 760.3,509.0 760.8,497.5 761.3,485.4 761.9,473.2 762.4,461.1 762.9,449.6 763.4,439.0 763.9,429.5 764.4,421.5 765.0,415.1 765.5,410.6 766.0,407.9 766.5,410.7 767.0,415.7 767.5,422.8 768.0,431.6 768.5,442.0 769.0,453.5 769.5,465.6 770.0,478.1 770.5,490.2 771.0,501.7 771.5,512.1 772.0,520.9 772.5,528.0 773.0,533.0 773.5,535.8 774.0,533.2 774.5,528.7 775.0,522.5 775.5,514.6 776.0,505.4 776.5,494.9 777.0,483.7 777.5,471.9 778.0,459.9 778.5,448.1 779.0,436.9 779.5,426.4 780.0,417.2 780.5,409.3 781.0,403.1 781.5,398.6 782.0,396.0 782.5,399.1 783.0,404.6 783.5,412.4 784.1,422.2 784.6,433.7 785.1,446.3 785.6,459.8 786.1,473.4 786.6,486.9 787.1,499.5 787.6,511.0 788.2,520.8 788.7,528.6 789.2,534.1 789.7,537.2 790.2,534.3 790.7,529.4 791.2,522.5 791.7,513.8 792.2,503.5 792.7,492.0 793.2,479.5 793.7,466.5 794.2,453.2 794.7,440.2 795.2,427.7 795.7,416.2 796.2,405.9 796.7,397.2 797.2,390.3 797.7,385.4 798.2,382.5 798.7,385.6 799.2,391.2 799.8,399.1 800.3,408.9 800.8,420.4 801.3,433.2 801.8,446.7 802.4,460.5 802.9,474.0 803.4,486.8 803.9,498.3 804.4,508.1 805.0,516.0 805.5,521.6 806.0,524.7 806.5,521.8 807.0,516.8 807.6,509.7 808.1,500.8 808.6,490.4 809.1,478.7 809.7,466.2 810.2,453.2 810.7,440.3 811.2,427.8 811.8,416.1 812.3,405.7 812.8,396.8 813.4,389.7 813.9,384.7 814.4,381.8 814.9,384.4 815.4,389.1 816.0,395.5 816.5,403.7 817.0,413.3 817.5,424.0 818.1,435.4 818.6,447.3 819.1,459.2 819.6,470.6 820.2,481.3 820.7,490.9 821.2,499.1 821.8,505.5 822.3,510.2 822.8,512.8 823.3,510.0 823.8,505.1 824.4,498.2 824.9,489.5 825.4,479.3 826.0,467.9 826.5,455.7 827.0,443.0 827.5,430.4 828.0,418.2 828.6,406.8 829.1,396.6 829.6,387.9 830.2,381.0 830.7,376.1 831.2,373.3 831.7,375.9 832.2,380.4 832.7,386.7 833.2,394.6 833.7,404.0 834.2,414.4 834.7,425.6 835.2,437.1 835.8,448.7 836.3,459.9 836.8,470.3 837.3,479.7 837.8,487.6 838.3,493.9 838.8,498.4 839.3,501.0 839.8,498.3 840.3,493.6 840.8,487.0 841.3,478.8 841.8,469.0 842.3,458.2 842.8,446.5 843.3,434.4 843.9,422.4 844.4,410.7 844.9,399.9 845.4,390.1 845.9,381.9 846.4,375.3 846.9,370.6 847.4,367.9 847.9,370.6 848.4,375.4 848.9,382.1 849.4,390.5 849.9,400.4 850.4,411.5 850.9,423.3 851.5,435.6 852.0,447.9 852.5,459.7 853.0,470.8 853.5,480.7 854.0,489.1 854.5,495.8 855.0,500.6 855.5,503.3 856.0,500.7 856.5,496.3 857.0,490.1 857.5,482.3 858.0,473.2 858.5,462.8 859.0,451.7 859.5,440.0 860.0,428.2 860.5,416.5 861.0,405.4 861.5,395.0 862.0,385.9 862.5,378.1 863.0,371.9 863.5,367.5 864.0,364.9 864.5,367.8 865.0,372.9 865.6,380.1 866.1,389.1 866.6,399.6 867.1,411.3 867.6,423.7 868.2,436.4 868.7,448.8 869.2,460.5 869.7,471.0 870.2,480.0 870.8,487.2 871.3,492.3 871.8,495.2 872.3,493.1 872.8,489.5 873.3,484.5 873.8,478.1 874.3,470.7 874.8,462.2 875.3,453.1 875.8,443.4 876.3,433.4 876.9,423.4 877.4,413.7 877.9,404.6 878.4,396.1 878.9,388.7 879.4,382.3 879.9,377.3 880.4,373.7 880.9,371.6 881.4,374.2 881.9,378.7 882.5,385.1 883.0,393.1 883.5,402.5 884.0,412.9 884.5,423.9 885.1,435.1 885.6,446.1 886.1,456.5 886.6,465.9 887.1,473.9 887.7,480.3 888.2,484.8 888.7,487.4 889.2,485.4 889.7,482.0 890.2,477.2 890.7,471.1 891.2,464.0 891.7,456.0 892.2,447.4 892.7,438.3 893.2,429.2 893.7,420.1 894.2,411.5 894.7,403.5 895.2,396.4 895.7,390.3 896.2,385.5 896.7,382.1 897.2,380.1 897.7,382.4 898.2,386.4 898.7,392.0 899.2,399.0 899.7,407.3 900.2,416.5 900.7,426.4 901.2,436.6 901.8,446.9 902.3,456.8 902.8,466.0 903.3,474.3 903.8,481.3 904.3,486.9 904.8,490.9 905.3,493.2 905.8,490.7 906.3,486.2 906.9,479.9 907.4,472.0 907.9,462.8 908.4,452.5 908.9,441.7 909.5,430.6 910.0,419.8 910.5,409.5 911.0,400.3 911.5,392.4 912.1,386.1 912.6,381.6 913.1,379.1 913.6,381.4 914.1,385.5 914.7,391.3 915.2,398.5 915.7,407.0 916.2,416.5 916.8,426.6 917.3,437.1 917.8,447.7 918.4,457.8 918.9,467.3 919.4,475.8 919.9,483.0 920.5,488.8 921.0,492.9 921.5,495.2 922.0,493.1 922.5,489.5 923.0,484.4 923.5,478.0 924.0,470.4 924.5,462.0 925.0,452.8 925.5,443.2 926.0,433.5 926.5,423.9 927.0,414.7 927.5,406.3 928.0,398.7 928.5,392.3 929.0,387.2 929.5,383.6 930.0,381.5 930.5,384.0 931.0,388.4 931.6,394.6 932.1,402.4 932.6,411.6 933.1,421.7 933.6,432.4 934.2,443.3 934.7,454.0 935.2,464.1 935.7,473.3 936.2,481.1 936.8,487.3 937.3,491.7 937.8,494.2 938.3,491.8 938.8,487.7 939.3,481.9 939.8,474.6 940.3,466.0 940.8,456.4 941.3,446.1 941.8,435.4 942.4,424.8 942.9,414.5 943.4,404.9 943.9,396.3 944.4,389.0 944.9,383.2 945.4,379.1 945.9,376.7 946.4,379.1 946.9,383.3 947.5,389.2 948.0,396.6 948.5,405.3 949.0,415.1 949.6,425.5 950.1,436.3 950.6,447.1 951.1,457.5 951.7,467.3 952.2,476.0 952.7,483.4 953.2,489.3 953.8,493.5 954.3,495.9 954.8,493.6 955.3,489.7 955.8,484.2 956.3,477.3 956.8,469.2 957.3,460.1 957.8,450.2 958.3,439.8 958.8,429.4 959.3,419.0 959.8,409.1 960.3,400.0 960.8,391.9 961.3,385.0 961.8,379.5 962.3,375.6 962.8,373.3 963.3,375.8 963.8,380.2 964.4,386.5 964.9,394.3 965.4,403.5 965.9,413.6 966.4,424.4 967.0,435.3 967.5,446.1 968.0,456.2 968.5,465.4 969.0,473.2 969.6,479.5 970.1,483.9 970.6,486.4 971.1,484.1 971.6,479.9 972.2,474.2 972.7,466.9 973.2,458.4 973.8,448.9 974.3,438.7 974.8,428.2 975.3,417.7 975.9,407.5 976.4,398.0 976.9,389.5 977.4,382.2 978.0,376.5 978.5,372.3 979.0,370.0 979.5,372.6 980.0,377.1 980.6,383.5 981.1,391.5 981.6,400.9 982.1,411.2 982.6,422.2 983.2,433.5 983.7,444.5 984.2,454.8 984.7,464.2 985.2,472.2 985.8,478.6 986.3,483.1 986.8,485.7 987.3,483.6 987.8,480.0 988.3,474.9 988.8,468.5 989.3,461.0 989.8,452.6 990.3,443.4 990.8,433.9 991.3,424.1 991.8,414.6 992.3,405.4 992.8,397.0 993.3,389.5 993.8,383.1 994.3,378.0 994.8,374.4 995.3,372.3 995.8,374.9 996.4,379.6 996.9,386.2 997.4,394.5 997.9,404.1 998.5,414.6 999.0,425.6 999.5,436.7 1000.1,447.2 1000.6,456.8 1001.1,465.1 1001.6,471.7 1002.2,476.4 1002.7,479.0 1003.2,476.8 1003.7,472.9 1004.3,467.5 1004.8,460.6 1005.3,452.6 1005.8,443.6 1006.3,434.0 1006.9,424.0 1007.4,414.0 1007.9,404.4 1008.4,395.4 1008.9,387.4 1009.4,380.5 1010.0,375.1 1010.5,371.2 1011.0,369.0" fill="none" stroke="#0000d8" stroke-width="1" shape-rendering="crispEdges"/>
</svg>
<div class="yl" style="top:101px">500</div>
<div class="yl" style="top:157px">400</div>
<div class="yl" style="top:213px">300</div>
<div class="yl" style="top:268px">200</div>
<div class="yl" style="top:324px">100</div>
<div class="yl" style="top:380px">0</div>
<div class="yl" style="top:435px">-100</div>
<div class="yl" style="top:491px">-200</div>
<div class="yl" style="top:546px">-300</div>
<div class="yl" style="top:602px">-400</div>
<div class="tx" style="left:6px;top:369px;font-size:13px;transform:rotate(-90deg);transform-origin:0 0">Amplitude</div>
<div class="xl" style="left:55px">32</div>
<div class="xl" style="left:219px">36</div>
<div class="xl" style="left:383px">40</div>
<div class="xl" style="left:547px">44</div>
<div class="xl" style="left:711px">48</div>
<div class="xl" style="left:875px">52</div>
<div class="tx" style="left:483px;top:632px;font-size:13px">Time (ms)</div>

<!-- STATS -->
<div class="L" style="left:0;top:652px;width:290px;background:#e0ddd5"></div><div class="L" style="left:0;top:653px;width:290px;background:#f7f6f2"></div>
<div class="tx" style="left:59px;top:659px">Максимум</div>
<div class="tx" style="left:135px;top:659px">Среднее Abs</div>
<div class="tx" style="left:212px;top:659px">Минимум</div>
<div class="tx" style="left:12px;top:679px">Левый</div>
<div class="tx" style="left:12px;top:703px">Правый</div>
<div class="fld" style="left:57px;top:675px;width:71px"><span>32767</span></div>
<div class="fld" style="left:134px;top:675px;width:71px"><span>11714</span></div>
<div class="fld" style="left:211px;top:675px;width:72px"><span>-32768</span></div>
<div class="fld" style="left:57px;top:700px;width:71px"><span>429</span></div>
<div class="fld" style="left:134px;top:700px;width:71px"><span>75</span></div>
<div class="fld" style="left:211px;top:700px;width:72px"><span>-408</span></div>
<div class="V" style="left:290px;top:651px;height:73px;background:#aca99f"></div>
<div class="V" style="left:291px;top:651px;height:73px;background:#fff"></div>

<!-- STATUS BAR -->
<div class="L" style="left:0;top:724px;width:1024px;background:#aca99f"></div>
<div class="L" style="left:0;top:725px;width:1024px;background:#fff"></div>
<div class="sf" style="left:653px;width:62px"><span>46.33&nbsp;&nbsp;ms</span></div>
<div class="sf" style="left:717px;width:83px"><span>-87.999</span></div>
<div class="sf" style="left:802px;width:61px"><span>0deg</span></div>
<div class="sf" style="left:888px;width:61px"><span>0</span></div>
<div class="sf" style="left:951px;width:71px"><span>0Ohms</span></div>

<!-- <div class="a" style="left:0;top:744px;width:1024px;height:24px;background:linear-gradient(#4a566e 0,#4a566e 1px,#c6d4ec 1px,#c6d4ec 2px,#98aac8 2px,#8799bb 8px,#7689ae 14px,#6a7da6 21px,#5a6d98 23px,#50628c 23px,#50628c 24px)"></div>
<svg class="a" style="left:24px;top:747px" width="19" height="18" viewBox="0 0 19 18">
<g fill="#a2b0c6" stroke="#3c4862" stroke-width="1.2" stroke-linejoin="round">
<path d="M4 1.2L9.5 1.7L8.5 6.6L3 6.1Z"/><path d="M11 3L17.3 4L16.3 9.4L10 8.5Z"/>
<path d="M2.5 8.2L8 8.7L7 13.6L1.5 13.1Z"/><path d="M9.5 10.2L15.8 11.2L14.8 16.4L8.5 15.5Z"/>
</g></svg>
<div class="tx" style="left:66px;top:747px;font-family:'Liberation Serif',serif;font-size:19px;color:#fff;letter-spacing:-1.4px;text-shadow:0 0 1px #c0c8e0">Google</div>
<!-- quick launch -->
<svg class="a" style="left:130px;top:748px" width="16" height="16" viewBox="0 0 16 16">
<path d="M2 10C2 5 5 2 9 2C12.5 2 14.5 4.5 14.5 8H5.5C5.5 10.5 7 12 9.5 12C11 12 12 11.4 13 10.5H14.3C13.2 13 11.4 14.5 9 14.5C5 14.5 2 12.5 2 10Z M5.6 6.4H11.3C11 5 10.2 4.2 8.5 4.2C7 4.2 6 5 5.6 6.4Z" fill="#2a8ae0" stroke="#1050a0" stroke-width="0.5"/>
<path d="M1 13C0 10 6 3 14 1C15.5 0.8 15 2 14 2.5" fill="none" stroke="#e8a820" stroke-width="1.5"/>
</svg>
<svg class="a" style="left:152px;top:748px" width="17" height="16" viewBox="0 0 17 16">
<path d="M10 1.5L3 11.5H9" fill="none" stroke="#102040" stroke-width="3.6" stroke-linejoin="miter"/>
<path d="M8 5L15 14.5H6.5" fill="none" stroke="#302000" stroke-width="3.6" stroke-linejoin="miter"/>
<path d="M10 1.5L3 11.5H9" fill="none" stroke="#40b8f0" stroke-width="1.8"/>
<path d="M8 5L15 14.5H6.5" fill="none" stroke="#f8e020" stroke-width="1.8"/>
</svg>
<svg class="a" style="left:176px;top:748px" width="17" height="16" viewBox="0 0 17 16">
<rect x="4" y="1.5" width="11" height="9" fill="#f0c090" stroke="#8a6a50"/>
<rect x="1" y="4" width="6" height="6" fill="#c8d4e0" stroke="#707880"/>
<path d="M8 10V14M5.5 12L8 15L10.5 12" stroke="#2070e0" stroke-width="1.8" fill="none"/>
</svg>
<svg class="a" style="left:200px;top:747px" width="15" height="17" viewBox="0 0 15 17">
<circle cx="7.5" cy="5" r="3.3" fill="#f0f020" stroke="#202000" stroke-width="1.4"/>
<circle cx="7.5" cy="5" r="1.2" fill="#60a020"/>
<path d="M7.5 0.5V1.7" stroke="#202000" stroke-width="1.2"/>
<g fill="none" stroke="#202000" stroke-width="3.2" stroke-linejoin="round"><path d="M4.5 9.5H1.8V12.2H4.5V15.5"/><path d="M7.5 9.5V13.5"/><path d="M10.5 15.5V9.5H13.2V12.2H10.5"/></g>
<g fill="none" stroke="#f4f020" stroke-width="1.3"><path d="M4.5 9.5H1.8V12.2H4.5V15.5"/><path d="M7.5 9.5V13.5"/><path d="M10.5 15.5V9.5H13.2V12.2H10.5"/></g>
</svg>
<svg class="a" style="left:222px;top:748px" width="16" height="16" viewBox="0 0 16 16">
<defs><linearGradient id="alg" x1="0" y1="0" x2="1" y2="1"><stop offset="0" stop-color="#707070"/><stop offset="0.6" stop-color="#202020"/><stop offset="1" stop-color="#101010"/></linearGradient></defs>
<rect x="0.5" y="0.5" width="15" height="15" rx="1.5" fill="url(#alg)" stroke="#181818"/>
<path d="M8 2.5C11 2.5 12.5 5 12 8C11.5 10.5 9.5 13.5 8 13.5C6.5 13.5 4.5 10.5 4 8C3.5 5 5 2.5 8 2.5Z" fill="#e8e8e8"/>
<path d="M5.2 7.5L7.2 9M10.8 7.5L8.8 9" stroke="#101010" stroke-width="1.5"/>
</svg>
<svg class="a" style="left:268px;top:752px" width="7" height="9" viewBox="0 0 7 9"><path d="M1 0.8L6 4.5L1 8.2Z" fill="#a6b4d0" stroke="#5a6a8e" stroke-width="0.8"/></svg>
<!-- task buttons -->
<div class="a" style="left:284px;top:746px;width:155px;height:20px;border-radius:3px;border:1px solid #44527a;background:linear-gradient(#5d6f96,#6a7ca4 40%,#7385ad);box-shadow:inset 1px 1px 0 #4e5e84"></div>
<svg class="a" style="left:295px;top:749px" width="14" height="14" viewBox="0 0 15 15">
<path d="M2 6 L5 8 L5 11 L8 11" fill="none" stroke="#000" stroke-width="1.6"/>
<path d="M8 6 L12 2 L13 2 L13 13 L12 13 L8 9 Z" fill="#1bbf3a" stroke="#000" stroke-width="1"/>
<rect x="12.5" y="2" width="2" height="12" fill="#000"/>
</svg>
<div class="tb" style="left:312px;top:752px;font-size:11px">Speaker Workshop - [...</div>
<svg class="a" style="left:454px;top:749px" width="12" height="15" viewBox="0 0 12 15">
<path d="M1 1H7L11 3V14H1Z" fill="#f4d060" stroke="#c09830" stroke-width="0.8"/>
<path d="M6 5V10C6 11 4 11 4 10" fill="none" stroke="#a07010" stroke-width="1"/>
</svg>
<div class="tb" style="left:472px;top:752px;font-size:11px">10.12.2010 Шкода С...</div>
<svg class="a" style="left:611px;top:747px" width="17" height="17" viewBox="0 0 17 17">
<circle cx="4" cy="3" r="2.2" fill="#f06030"/>
<path d="M4 5V15" stroke="#30a040" stroke-width="2.6"/>
<rect x="6.5" y="5.5" width="10" height="10" fill="#3080d0" stroke="#2060a0"/>
<rect x="8" y="7" width="3" height="7" fill="#fff"/><rect x="12" y="7" width="3" height="3" fill="#f0a030"/><rect x="12" y="11" width="3" height="3" fill="#f06020"/>
</svg>
<div class="tb" style="left:632px;top:752px;font-size:11px">Суммарный сигнал Т...</div>
<!-- tray -->
<div class="a" style="left:932px;top:748px;width:16px;height:13px;background:#4d6290"></div>
<div class="tb" style="left:933px;top:750px;font-size:11px">RU</div>
<div class="a" style="left:960px;top:747px;width:62px;height:19px;border-radius:6px;border:1px solid #4a5a80;background:linear-gradient(#7f93bb,#7088b2 50%,#6a82ae);box-shadow:inset 0 1px 0 #a8b8d6"></div>
<svg class="a" style="left:964px;top:751px" width="7" height="11" viewBox="0 0 7 11"><path d="M6 1L1 5.5L6 10Z" fill="#8ea2c6" stroke="#3c4c70" stroke-width="0.9"/></svg>
<div class="tb" style="left:983px;top:752px;font-size:11px">14:20</div>
 -->
<div class="a" style="left:0;top:744px;width:1024px;height:24px;background:linear-gradient(#4a566e 0,#4a566e 1px,#c6d4ec 1px,#c6d4ec 2px,#98aac8 2px,#8799bb 8px,#7689ae 14px,#6a7da6 21px,#5a6d98 23px,#50628c 23px,#50628c 24px)"></div>
<svg class="a" style="left:24px;top:747px" width="19" height="18" viewBox="0 0 19 18">
<g fill="#a2b0c6" stroke="#3c4862" stroke-width="1.2" stroke-linejoin="round">
<path d="M4 1.2L9.5 1.7L8.5 6.6L3 6.1Z"/><path d="M11 3L17.3 4L16.3 9.4L10 8.5Z"/>
<path d="M2.5 8.2L8 8.7L7 13.6L1.5 13.1Z"/><path d="M9.5 10.2L15.8 11.2L14.8 16.4L8.5 15.5Z"/>
</g></svg>
<div class="tx" style="left:66px;top:747px;font-family:'Liberation Serif',serif;font-size:19px;color:#fff;letter-spacing:-1.4px;text-shadow:0 0 1px #c0c8e0">Google</div>
<!-- quick launch -->
<svg class="a" style="left:130px;top:748px" width="16" height="16" viewBox="0 0 16 16">
<path d="M2 10C2 5 5 2 9 2C12.5 2 14.5 4.5 14.5 8H5.5C5.5 10.5 7 12 9.5 12C11 12 12 11.4 13 10.5H14.3C13.2 13 11.4 14.5 9 14.5C5 14.5 2 12.5 2 10Z M5.6 6.4H11.3C11 5 10.2 4.2 8.5 4.2C7 4.2 6 5 5.6 6.4Z" fill="#2a8ae0" stroke="#1050a0" stroke-width="0.5"/>
<path d="M1 13C0 10 6 3 14 1C15.5 0.8 15 2 14 2.5" fill="none" stroke="#e8a820" stroke-width="1.5"/>
</svg>
<svg class="a" style="left:152px;top:748px" width="17" height="16" viewBox="0 0 17 16">
<path d="M10 1.5L3 11.5H9" fill="none" stroke="#102040" stroke-width="3.6" stroke-linejoin="miter"/>
<path d="M8 5L15 14.5H6.5" fill="none" stroke="#302000" stroke-width="3.6" stroke-linejoin="miter"/>
<path d="M10 1.5L3 11.5H9" fill="none" stroke="#40b8f0" stroke-width="1.8"/>
<path d="M8 5L15 14.5H6.5" fill="none" stroke="#f8e020" stroke-width="1.8"/>
</svg>
<svg class="a" style="left:176px;top:748px" width="17" height="16" viewBox="0 0 17 16">
<rect x="4" y="1.5" width="11" height="9" fill="#f0c090" stroke="#8a6a50"/>
<rect x="1" y="4" width="6" height="6" fill="#c8d4e0" stroke="#707880"/>
<path d="M8 10V14M5.5 12L8 15L10.5 12" stroke="#2070e0" stroke-width="1.8" fill="none"/>
</svg>
<svg class="a" style="left:200px;top:747px" width="15" height="17" viewBox="0 0 15 17">
<circle cx="7.5" cy="5" r="3.3" fill="#f0f020" stroke="#202000" stroke-width="1.4"/>
<circle cx="7.5" cy="5" r="1.2" fill="#60a020"/>
<path d="M7.5 0.5V1.7" stroke="#202000" stroke-width="1.2"/>
<g fill="none" stroke="#202000" stroke-width="3.2" stroke-linejoin="round"><path d="M4.5 9.5H1.8V12.2H4.5V15.5"/><path d="M7.5 9.5V13.5"/><path d="M10.5 15.5V9.5H13.2V12.2H10.5"/></g>
<g fill="none" stroke="#f4f020" stroke-width="1.3"><path d="M4.5 9.5H1.8V12.2H4.5V15.5"/><path d="M7.5 9.5V13.5"/><path d="M10.5 15.5V9.5H13.2V12.2H10.5"/></g>
</svg>
<svg class="a" style="left:222px;top:748px" width="16" height="16" viewBox="0 0 16 16">
<defs><linearGradient id="alg" x1="0" y1="0" x2="1" y2="1"><stop offset="0" stop-color="#707070"/><stop offset="0.6" stop-color="#202020"/><stop offset="1" stop-color="#101010"/></linearGradient></defs>
<rect x="0.5" y="0.5" width="15" height="15" rx="1.5" fill="url(#alg)" stroke="#181818"/>
<path d="M8 2.5C11 2.5 12.5 5 12 8C11.5 10.5 9.5 13.5 8 13.5C6.5 13.5 4.5 10.5 4 8C3.5 5 5 2.5 8 2.5Z" fill="#e8e8e8"/>
<path d="M5.2 7.5L7.2 9M10.8 7.5L8.8 9" stroke="#101010" stroke-width="1.5"/>
</svg>
<svg class="a" style="left:268px;top:752px" width="7" height="9" viewBox="0 0 7 9"><path d="M1 0.8L6 4.5L1 8.2Z" fill="#a6b4d0" stroke="#5a6a8e" stroke-width="0.8"/></svg>
<!-- task buttons -->
<div class="a" style="left:284px;top:746px;width:155px;height:20px;border-radius:3px;border:1px solid #44527a;background:linear-gradient(#5d6f96,#6a7ca4 40%,#7385ad);box-shadow:inset 1px 1px 0 #4e5e84"></div>
<svg class="a" style="left:295px;top:749px" width="14" height="14" viewBox="0 0 15 15">
<path d="M2 6 L5 8 L5 11 L8 11" fill="none" stroke="#000" stroke-width="1.6"/>
<path d="M8 6 L12 2 L13 2 L13 13 L12 13 L8 9 Z" fill="#1bbf3a" stroke="#000" stroke-width="1"/>
<rect x="12.5" y="2" width="2" height="12" fill="#000"/>
</svg>
<div class="tb" style="left:312px;top:752px;font-size:11px">Speaker Workshop - [...</div>
<svg class="a" style="left:454px;top:749px" width="12" height="15" viewBox="0 0 12 15">
<path d="M1 1H7L11 3V14H1Z" fill="#f4d060" stroke="#c09830" stroke-width="0.8"/>
<path d="M6 5V10C6 11 4 11 4 10" fill="none" stroke="#a07010" stroke-width="1"/>
</svg>
<div class="tb" style="left:472px;top:752px;font-size:11px">10.12.2010 Шкода С...</div>
<svg class="a" style="left:611px;top:747px" width="17" height="17" viewBox="0 0 17 17">
<circle cx="4" cy="3" r="2.2" fill="#f06030"/>
<path d="M4 5V15" stroke="#30a040" stroke-width="2.6"/>
<rect x="6.5" y="5.5" width="10" height="10" fill="#3080d0" stroke="#2060a0"/>
<rect x="8" y="7" width="3" height="7" fill="#fff"/><rect x="12" y="7" width="3" height="3" fill="#f0a030"/><rect x="12" y="11" width="3" height="3" fill="#f06020"/>
</svg>
<div class="tb" style="left:632px;top:752px;font-size:11px">Суммарный сигнал Т...</div>
<!-- tray -->
<div class="a" style="left:932px;top:748px;width:16px;height:13px;background:#4d6290"></div>
<div class="tb" style="left:933px;top:750px;font-size:11px">RU</div>
<div class="a" style="left:960px;top:747px;width:62px;height:19px;border-radius:6px;border:1px solid #4a5a80;background:linear-gradient(#7f93bb,#7088b2 50%,#6a82ae);box-shadow:inset 0 1px 0 #a8b8d6"></div>
<svg class="a" style="left:964px;top:751px" width="7" height="11" viewBox="0 0 7 11"><path d="M6 1L1 5.5L6 10Z" fill="#8ea2c6" stroke="#3c4c70" stroke-width="0.9"/></svg>
<div class="tb" style="left:983px;top:752px;font-size:11px">14:20</div>

</body></html>
